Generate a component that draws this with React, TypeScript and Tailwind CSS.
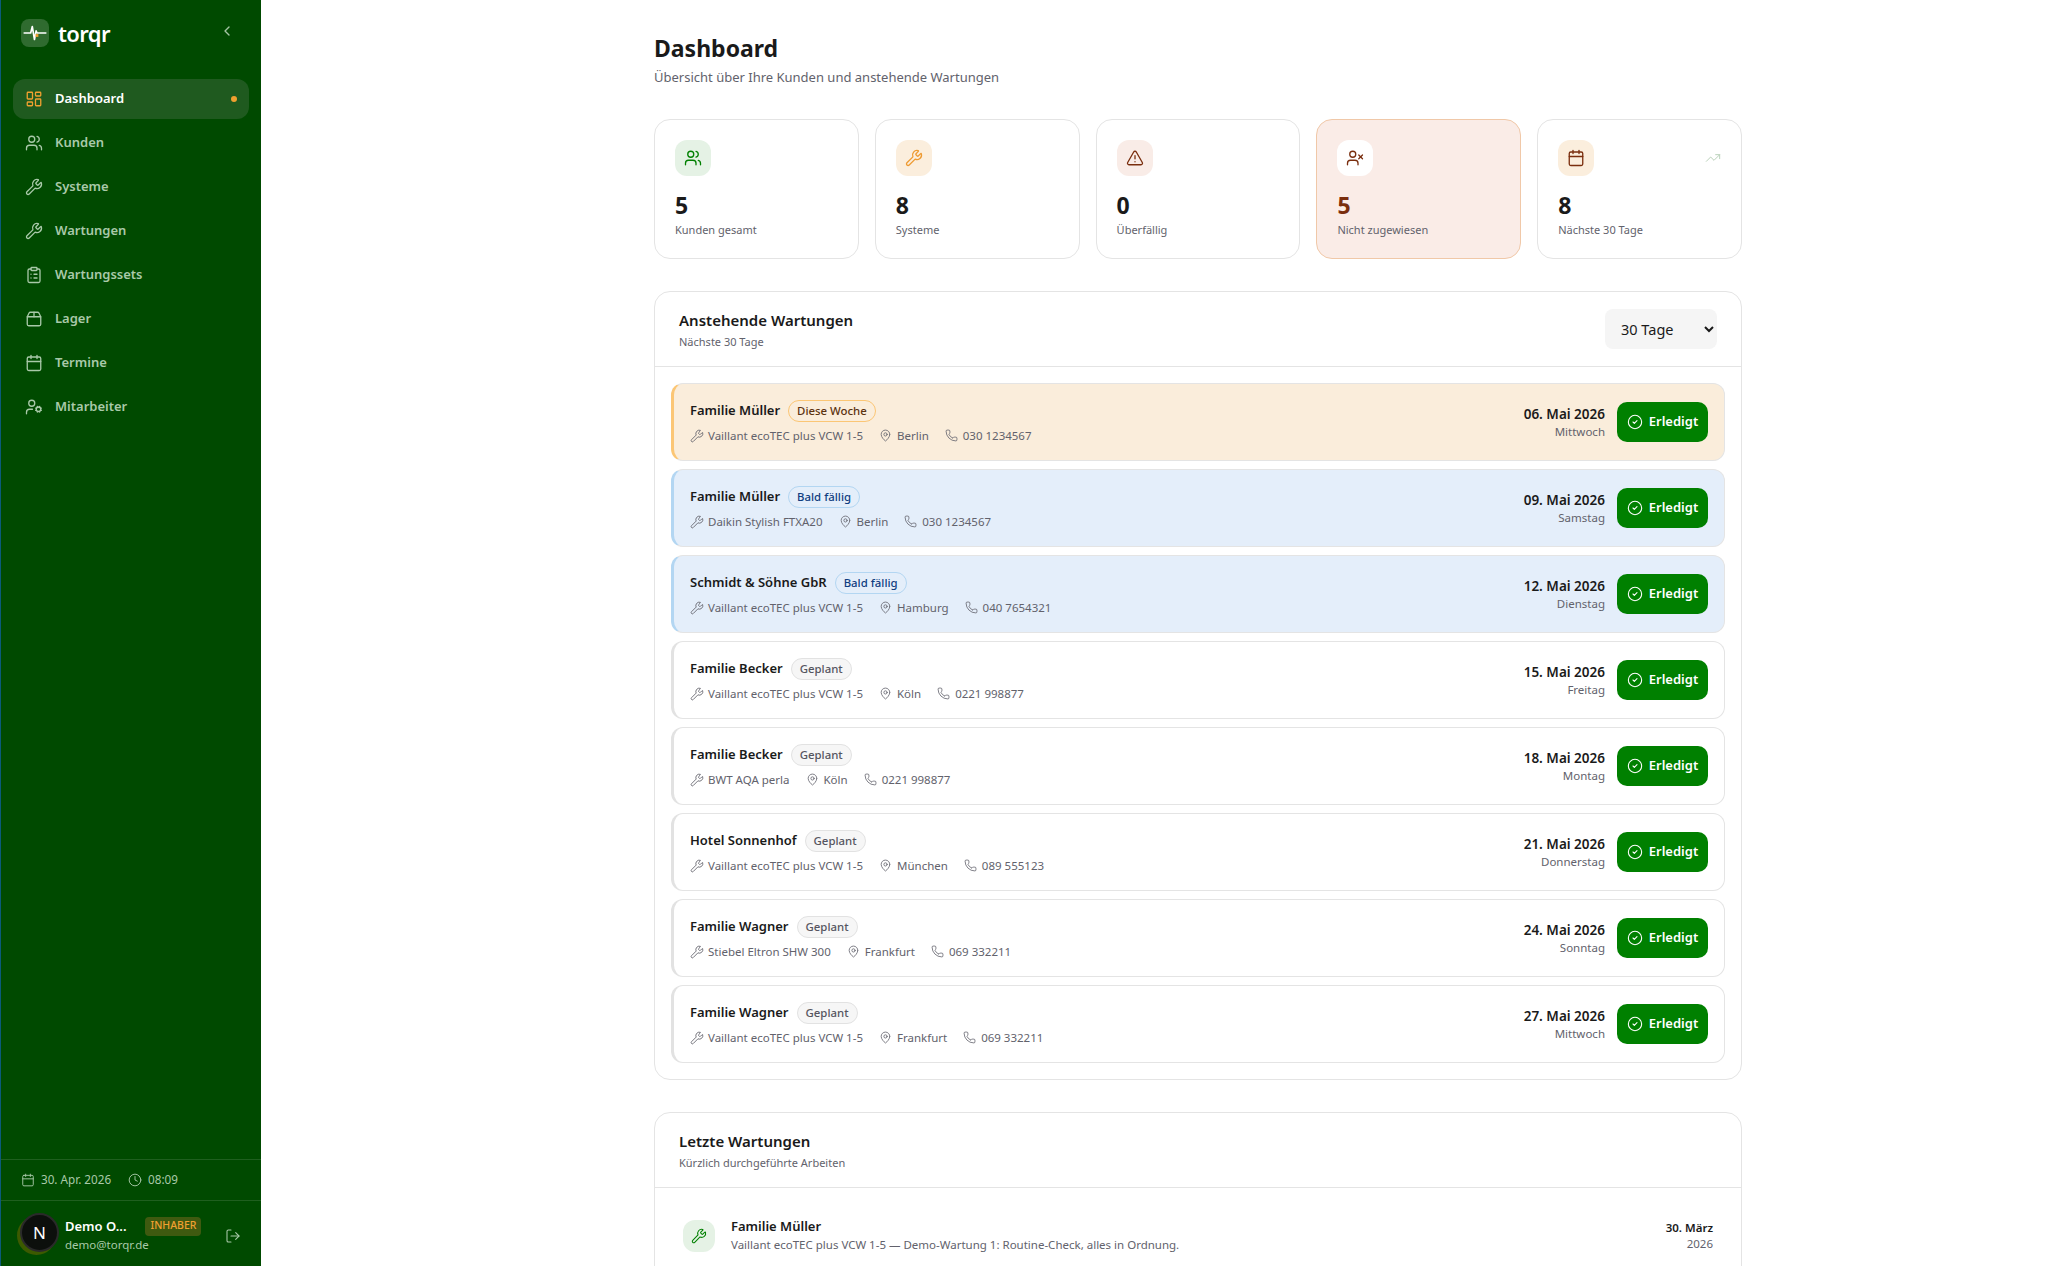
import {
  LayoutDashboard, Users, Wrench, ClipboardList, Package2, Calendar, UserCog, UserX,
  TriangleAlert, TrendingUp, MapPin, Phone, CircleCheck, Clock, LogOut, ChevronLeft,
} from 'lucide-react';

const navItems = [
  { label: 'Dashboard', icon: LayoutDashboard, active: true },
  { label: 'Kunden', icon: Users },
  { label: 'Systeme', icon: Wrench },
  { label: 'Wartungen', icon: Wrench },
  { label: 'Wartungssets', icon: ClipboardList },
  { label: 'Lager', icon: Package2 },
  { label: 'Termine', icon: Calendar },
  { label: 'Mitarbeiter', icon: UserCog },
];

const stats = [
  { value: '5', label: 'Kunden gesamt', icon: Users, box: 'bg-[#e5f2e5]', color: 'text-[#008000]' },
  { value: '8', label: 'Systeme', icon: Wrench, box: 'bg-[#fbeedd]', color: 'text-[#ee9b33]' },
  { value: '0', label: 'Überfällig', icon: TriangleAlert, box: 'bg-[#f9ece7]', color: 'text-[#7a2e0e]' },
  { value: '5', label: 'Nicht zugewiesen', icon: UserX, box: 'bg-white', color: 'text-[#7a2e0e]', highlight: true },
  { value: '8', label: 'Nächste 30 Tage', icon: Calendar, box: 'bg-[#fbeedd]', color: 'text-[#7a2e0e]', trend: true },
];

type Tone = 'week' | 'soon' | 'plan';

const rows: { name: string; tone: Tone; system: string; city: string; phone: string; date: string; day: string }[] = [
  { name: 'Familie Müller', tone: 'week', system: 'Vaillant ecoTEC plus VCW 1-5', city: 'Berlin', phone: '030 1234567', date: '06. Mai 2026', day: 'Mittwoch' },
  { name: 'Familie Müller', tone: 'soon', system: 'Daikin Stylish FTXA20', city: 'Berlin', phone: '030 1234567', date: '09. Mai 2026', day: 'Samstag' },
  { name: 'Schmidt & Söhne GbR', tone: 'soon', system: 'Vaillant ecoTEC plus VCW 1-5', city: 'Hamburg', phone: '040 7654321', date: '12. Mai 2026', day: 'Dienstag' },
  { name: 'Familie Becker', tone: 'plan', system: 'Vaillant ecoTEC plus VCW 1-5', city: 'Köln', phone: '0221 998877', date: '15. Mai 2026', day: 'Freitag' },
  { name: 'Familie Becker', tone: 'plan', system: 'BWT AQA perla', city: 'Köln', phone: '0221 998877', date: '18. Mai 2026', day: 'Montag' },
  { name: 'Hotel Sonnenhof', tone: 'plan', system: 'Vaillant ecoTEC plus VCW 1-5', city: 'München', phone: '089 555123', date: '21. Mai 2026', day: 'Donnerstag' },
  { name: 'Familie Wagner', tone: 'plan', system: 'Stiebel Eltron SHW 300', city: 'Frankfurt', phone: '069 332211', date: '24. Mai 2026', day: 'Sonntag' },
  { name: 'Familie Wagner', tone: 'plan', system: 'Vaillant ecoTEC plus VCW 1-5', city: 'Frankfurt', phone: '069 332211', date: '27. Mai 2026', day: 'Mittwoch' },
];

const toneStyles = {
  week: {
    row: 'bg-[#faeddb] border-l-[#fbc675]',
    badge: 'border-[#fbc675] text-[#5c3310]',
    text: 'Diese Woche',
  },
  soon: {
    row: 'bg-[#e4eefa] border-l-[#b3d6f2]',
    badge: 'border-[#b3d6f2] text-[#0f3d80]',
    text: 'Bald fällig',
  },
  plan: {
    row: 'bg-white border-l-[#e2e2e2]',
    badge: 'border-[#e2e2e2] bg-[#f6f6f6] text-[#555560]',
    text: 'Geplant',
  },
};

function Sidebar() {
  return (
    <aside className="w-[261px] shrink-0 h-full flex flex-col bg-[#004a00] border-l border-l-[#0b5a7a]">
      <div className="flex items-center justify-between h-[79px] pl-[20px] pr-[26px] pt-[2px] pb-[16px]">
        <div className="flex items-center gap-[9px]">
          <div className="w-[28px] h-[28px] rounded-lg bg-[#2f6b2f] flex items-center justify-center">
            <svg width="26" height="26" viewBox="0 0 24 24" fill="none" stroke="white" strokeWidth="1.5" strokeLinecap="round" strokeLinejoin="round">
              <path d="M2 12h6l1.5-6 2 12 1.5-8 1 2h8" />
              <rect x="12.5" y="13" width="2.6" height="2.6" fill="#f0a030" stroke="none" />
            </svg>
          </div>
          <span className="text-[22px] leading-none font-semibold text-white tracking-[-0.6px]">torqr</span>
        </div>
        <ChevronLeft size={16} className="text-[#a5c5a5] mb-[4px]" />
      </div>
      <nav className="flex flex-col gap-[4px] px-[12px]">
        {navItems.map((item) => (
          <div
            key={item.label}
            className={`flex items-center gap-[12px] h-[40px] px-[12px] rounded-xl text-[13px] font-semibold ${item.active ? 'bg-[#1f5a1f] text-white' : 'text-[#a9c9a9]'}`}
          >
            <item.icon size={18} strokeWidth={1.75} className={item.active ? 'text-[#f0a030]' : 'text-[#a9c9a9]'} />
            <span className="flex-1">{item.label}</span>
            {item.active && <span className="w-[6px] h-[6px] rounded-full bg-[#f0a030]" />}
          </div>
        ))}
      </nav>
      <div className="mt-auto">
        <div className="border-t border-[#1f5f1f] h-[41px] flex items-center gap-[17px] px-[20px] text-[11.7px] text-[#a9c9a9]">
          <span className="flex items-center gap-[6px]"><Calendar size={14} strokeWidth={1.6} />30. Apr. 2026</span>
          <span className="flex items-center gap-[6px]"><Clock size={14} strokeWidth={1.6} />08:09</span>
        </div>
        <div className="border-t border-[#1f5f1f] h-[66px] flex items-center pl-[19px] pr-[20px] pb-[2px]">
          <div className="relative w-[39px] h-[39px] shrink-0">
            <div className="absolute left-[-3px] top-[3px] w-[39px] h-[39px] rounded-full bg-[#3c5a00]" />
            <div className="absolute inset-0 rounded-full bg-[#0c0f0c] border-2 border-[#2a2a2a] flex items-center justify-center text-[17px] text-white">N</div>
          </div>
          <div className="ml-[6px] flex-1 min-w-0 pt-[4px]">
            <div className="flex items-center gap-[19px]">
              <span className="text-[13px] leading-[18px] font-semibold text-white whitespace-nowrap">Demo O...</span>
              <span className="rounded bg-[#3f5a10] text-[#f0a030] text-[10.5px] font-medium w-[56px] h-[19px] flex items-center justify-center">INHABER</span>
            </div>
            <div className="text-[11.5px] leading-[16px] text-[#a9c9a9] mt-[1px]">demo@torqr.de</div>
          </div>
          <LogOut size={16} strokeWidth={1.6} className="text-[#a9c9a9] shrink-0 mt-[6px]" />
        </div>
      </div>
    </aside>
  );
}

function MaintenanceRow({ row }: { row: (typeof rows)[number] }) {
  const tone = toneStyles[row.tone];
  return (
    <div className={`flex items-center justify-between h-[78px] pl-[16px] pr-[16px] rounded-xl border border-[#e4e4e4] border-l-[3px] ${tone.row}`}>
      <div>
        <div className="flex items-center gap-[8px]">
          <span className="text-[13px] font-semibold text-[#1a1a1a]">{row.name}</span>
          <span className={`rounded-full border px-[8px] h-[22px] flex items-center text-[11.4px] font-medium ${tone.badge}`}>{tone.text}</span>
        </div>
        <div className="flex items-center gap-[16px] mt-[5px] text-[11.5px] text-[#62626c]">
          <span className="flex items-center gap-[4px]"><Wrench size={14} strokeWidth={1.5} />{row.system}</span>
          <span className="flex items-center gap-[5px]"><MapPin size={13} strokeWidth={1.5} />{row.city}</span>
          <span className="flex items-center gap-[5px]"><Phone size={13} strokeWidth={1.5} />{row.phone}</span>
        </div>
      </div>
      <div className="flex items-center gap-[12px]">
        <div className="text-right">
          <div className="text-[13.5px] leading-[20px] font-semibold text-[#1a1a1a]">{row.date}</div>
          <div className="text-[11.5px] leading-[16px] text-[#62626c]">{row.day}</div>
        </div>
        <button className="flex items-center justify-center gap-[6px] w-[91px] h-[40px] rounded-[10px] bg-[#008000] text-white text-[13px] font-semibold">
          <CircleCheck size={16} strokeWidth={1.6} />
          Erledigt
        </button>
      </div>
    </div>
  );
}

export default function App() {
  return (
    <div className="h-screen flex overflow-hidden bg-white font-['Noto_Sans',sans-serif]">
      <Sidebar />
      <main className="flex-1 pl-[393px] pr-[321px] pt-[32px]">
        <h1 className="text-[23px] leading-[32px] font-bold text-[#1a1a1a]">Dashboard</h1>
        <p className="text-[13px] leading-[20px] text-[#62626c] mt-[3px]">Übersicht über Ihre Kunden und anstehende Wartungen</p>

        <div className="grid grid-cols-5 gap-[16px] mt-[32px]">
          {stats.map((s) => (
            <div key={s.label} className={`h-[140px] rounded-2xl border p-[20px] ${s.highlight ? 'bg-[#faece7] border-[#f0c8a8]' : 'bg-white border-[#e4e4e4]'}`}>
              <div className="flex items-center justify-between">
                <div className={`w-[36px] h-[36px] rounded-xl flex items-center justify-center ${s.box} ${s.color}`}>
                  <s.icon size={18} strokeWidth={1.75} />
                </div>
                {s.trend && <TrendingUp size={16} strokeWidth={1.4} className="text-[#b5cdb5]" />}
              </div>
              <div className={`mt-[13px] text-[23px] leading-[32px] font-bold ${s.highlight ? 'text-[#7a2e0e]' : 'text-[#1a1a1a]'}`}>{s.value}</div>
              <div className="text-[11px] leading-[16px] text-[#62626c] mt-[1px]">{s.label}</div>
            </div>
          ))}
        </div>

        <section className="mt-[32px] rounded-2xl border border-[#e4e4e4] bg-white">
          <div className="flex items-center justify-between h-[75px] pl-[24px] pr-[24px] border-b border-[#e4e4e4]">
            <div>
              <h2 className="text-[15px] leading-[24px] font-semibold text-[#1a1a1a]">Anstehende Wartungen</h2>
              <p className="text-[11px] leading-[16px] text-[#62626c] mt-[2px]">Nächste 30 Tage</p>
            </div>
            <select className="w-[112px] h-[40px] px-[12px] rounded-lg bg-[#f5f5f5] text-[14.5px] text-[#1a1a1a]" defaultValue="30">
              <option value="30">30 Tage</option>
            </select>
          </div>
          <div className="flex flex-col gap-[8px] p-[16px]">
            {rows.map((r) => (
              <MaintenanceRow key={r.date} row={r} />
            ))}
          </div>
        </section>

        <section className="mt-[32px] rounded-t-2xl border border-[#e4e4e4] bg-white">
          <div className="flex items-center h-[75px] pl-[24px] border-b border-[#e4e4e4]">
            <div>
              <h2 className="text-[15px] leading-[24px] font-semibold text-[#1a1a1a]">Letzte Wartungen</h2>
              <p className="text-[11px] leading-[16px] text-[#62626c] mt-[2px]">Kürzlich durchgeführte Arbeiten</p>
            </div>
          </div>
          <div className="flex items-center justify-between pl-[28px] pr-[28px] pt-[29px] pb-[40px]">
            <div className="flex items-center gap-[16px]">
              <div className="w-[32px] h-[32px] rounded-xl bg-[#e5f2e5] flex items-center justify-center text-[#008000]">
                <Wrench size={16} strokeWidth={1.6} />
              </div>
              <div>
                <div className="text-[13px] leading-[18px] font-semibold text-[#1a1a1a]">Familie Müller</div>
                <div className="text-[11.5px] leading-[18px] text-[#62626c] mt-[1px]">Vaillant ecoTEC plus VCW 1-5 — Demo-Wartung 1: Routine-Check, alles in Ordnung.</div>
              </div>
            </div>
            <div className="text-right">
              <div className="text-[11.5px] leading-[16px] font-semibold text-[#1a1a1a]">30. März</div>
              <div className="text-[11.5px] leading-[16px] text-[#62626c]">2026</div>
            </div>
          </div>
        </section>
      </main>
    </div>
  );
}
